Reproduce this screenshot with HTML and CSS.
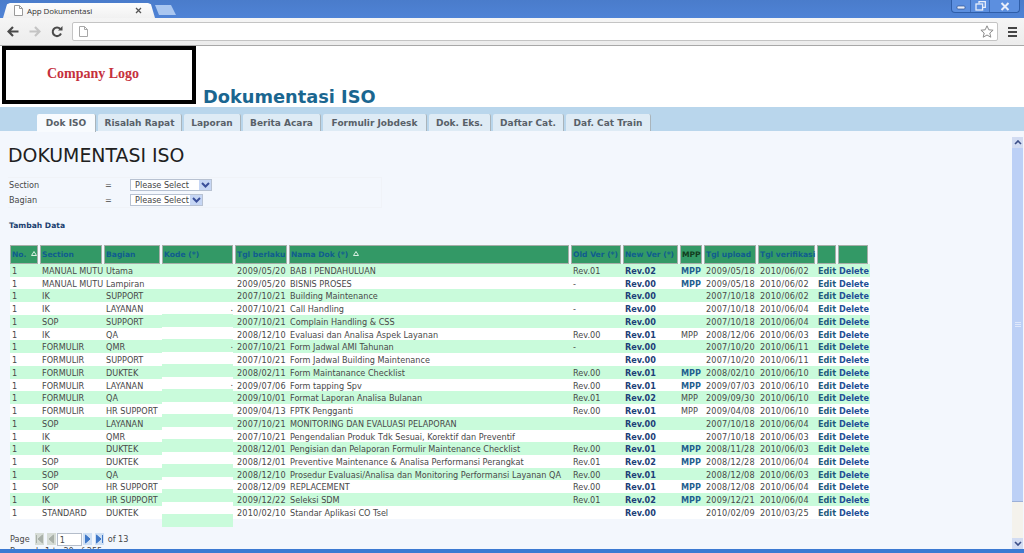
FILE: index.html
```html
<!DOCTYPE html>
<html lang="id">
<head>
<meta charset="utf-8">
<title>App Dokumentasi</title>
<link rel="stylesheet" href="styles.css">
</head>
<body>
<div class="window">
  <div class="titlebar">
    <div class="tab">
      <svg class="doc-icon" width="9" height="11" viewBox="0 0 9 11"><path d="M.5.5h5l3 3v7h-8z" fill="#fff" stroke="#9a9a9a"/><path d="M5.500.5v3h3" fill="none" stroke="#9a9a9a"/></svg>
      <span class="tab-title">App Dokumentasi</span>
      <svg class="tab-close" width="7" height="7" viewBox="0 0 7 7"><path d="M1 1l5 5M6 1L1 6" stroke="#555" stroke-width="1.300"/></svg>
    </div>
    <div class="newtab"></div>
    <div class="winctl">
      <span class="wbtn wmin"><svg width="10" height="8" viewBox="0 0 10 8"><rect x="1" y="4" width="8" height="3" rx="1" fill="#e8eefa" stroke="#2c4f8c" stroke-width=".7"/></svg></span>
      <span class="wbtn wres"><svg width="11" height="10" viewBox="0 0 11 10"><path d="M4 2.500V.7h6.300v5.600H8" fill="none" stroke="#e8eefa" stroke-width="1.300"/><rect x="1" y="3" width="6.600" height="6" fill="none" stroke="#e8eefa" stroke-width="1.300"/></svg></span>
      <span class="wbtn wcls"><svg width="10" height="9" viewBox="0 0 10 9"><path d="M1.500 1l7 7M8.500 1l-7 7" stroke="#e8eefa" stroke-width="2"/></svg></span>
    </div>
  </div>
  <div class="toolbar">
    <svg class="tool" width="12" height="11" viewBox="0 0 12 11"><path d="M11.500 5.500H2.500M6 1L1.500 5.500 6 10" fill="none" stroke="#4a4a4a" stroke-width="2.200"/></svg>
    <svg class="tool" width="12" height="11" viewBox="0 0 12 11"><path d="M.5 5.500h9M6 1l4.500 4.500L6 10" fill="none" stroke="#c4c4c4" stroke-width="2.200"/></svg>
    <svg class="tool" width="12" height="12" viewBox="0 0 12 12"><path d="M10 7.500A4.300 4.300 0 1 1 9.300 3" fill="none" stroke="#4a4a4a" stroke-width="2"/><path d="M7 4.500h4.500V0z" fill="#4a4a4a"/></svg>
    <div class="omnibox">
      <svg width="9" height="11" viewBox="0 0 9 11"><path d="M.5.5h5l3 3v7h-8z" fill="#fff" stroke="#a8a8a8"/><path d="M5.500.5v3h3" fill="none" stroke="#a8a8a8"/></svg>
      <svg width="14" height="13" viewBox="0 0 14 13"><path d="M7 .8l1.800 4 4.300.4-3.300 2.800 1 4.200L7 10l-3.800 2.200 1-4.200L.9 5.200l4.300-.4z" fill="#fff" stroke="#8c8c8c"/></svg>
    </div>
    <div class="menu"><i></i><i></i><i></i></div>
  </div>

  <header class="site-header">
    <div class="logo">Company Logo</div>
    <div class="app-title">Dokumentasi ISO</div>
  </header>

  <nav class="tabs">
    <a class="navtab active t1">Dok ISO</a>
    <a class="navtab t2">Risalah Rapat</a>
    <a class="navtab t3">Laporan</a>
    <a class="navtab t4">Berita Acara</a>
    <a class="navtab t5">Formulir Jobdesk</a>
    <a class="navtab t6">Dok. Eks.</a>
    <a class="navtab t7">Daftar Cat.</a>
    <a class="navtab t8">Daf. Cat Train</a>
  </nav>

  <div class="page">
    <main class="content">
      <h1>DOKUMENTASI ISO</h1>
      <div class="filter">
        <div class="filter-row">
          <span class="flabel">Section</span><span class="feq">=</span>
          <div class="select sel-wide"><span>Please Select</span><b><svg width="9" height="6" viewBox="0 0 9 6"><path d="M1 1l3.500 3.500L8 1" fill="none" stroke="#3a4f9a" stroke-width="2"/></svg></b></div>
        </div>
        <div class="filter-row">
          <span class="flabel">Bagian</span><span class="feq">=</span>
          <div class="select"><span>Please Select</span><b><svg width="9" height="6" viewBox="0 0 9 6"><path d="M1 1l3.500 3.500L8 1" fill="none" stroke="#3a4f9a" stroke-width="2"/></svg></b></div>
        </div>
      </div>
      <a class="add">Tambah Data</a>

      <div class="grid">
        <div class="row head">
          <span>No.<svg class="sort" width="6" height="5" viewBox="0 0 6 5"><path d="M3 .5L5.500 4.500H.5z" fill="none" stroke="#d8efe2"/></svg></span><span>Section</span><span>Bagian</span><span>Kode (*)</span><span>Tgl berlaku</span><span>Nama Dok (*)<svg class="sort" width="6" height="5" viewBox="0 0 6 5"><path d="M3 .5L5.500 4.500H.5z" fill="none" stroke="#d8efe2"/></svg></span><span>Old Ver (*)</span><span>New Ver (*)</span><span>MPP</span><span>Tgl upload</span><span>Tgl verifikasi</span><span></span><span></span>
        </div>
        <div class="body">
          <div class="row g"><span>1</span><span>MANUAL MUTU</span><span>Utama</span><span></span><span>2009/05/20</span><span>BAB I PENDAHULUAN</span><span>Rev.01</span><a class="rev">Rev.02</a><a class="mpp">MPP</a><span>2009/05/18</span><span>2010/06/02</span><a class="edit">Edit</a><a class="del">Delete</a></div>
          <div class="row"><span>1</span><span>MANUAL MUTU</span><span>Lampiran</span><span></span><span>2009/05/20</span><span>BISNIS PROSES</span><span>-</span><a class="rev">Rev.00</a><a class="mpp">MPP</a><span>2009/05/18</span><span>2010/06/02</span><a class="edit">Edit</a><a class="del">Delete</a></div>
          <div class="row g"><span>1</span><span>IK</span><span>SUPPORT</span><span></span><span>2007/10/21</span><span>Building Maintenance</span><span></span><a class="rev">Rev.00</a><span></span><span>2007/10/18</span><span>2010/06/02</span><a class="edit">Edit</a><a class="del">Delete</a></div>
          <div class="row"><span>1</span><span>IK</span><span>LAYANAN</span><span></span><span>2007/10/21</span><span>Call Handling</span><span>-</span><a class="rev">Rev.00</a><span></span><span>2007/10/18</span><span>2010/06/04</span><a class="edit">Edit</a><a class="del">Delete</a></div>
          <div class="row g"><span>1</span><span>SOP</span><span>SUPPORT</span><span></span><span>2007/10/21</span><span>Complain Handling &amp; CSS</span><span></span><a class="rev">Rev.00</a><span></span><span>2007/10/18</span><span>2010/06/04</span><a class="edit">Edit</a><a class="del">Delete</a></div>
          <div class="row"><span>1</span><span>IK</span><span>QA</span><span></span><span>2008/12/10</span><span>Evaluasi dan Analisa Aspek Layanan</span><span>Rev.00</span><a class="rev">Rev.01</a><span>MPP</span><span>2008/12/06</span><span>2010/06/03</span><a class="edit">Edit</a><a class="del">Delete</a></div>
          <div class="row g"><span>1</span><span>FORMULIR</span><span>QMR</span><span></span><span>2007/10/21</span><span>Form Jadwal AMI Tahunan</span><span>-</span><a class="rev">Rev.00</a><span></span><span>2007/10/20</span><span>2010/06/11</span><a class="edit">Edit</a><a class="del">Delete</a></div>
          <div class="row"><span>1</span><span>FORMULIR</span><span>SUPPORT</span><span></span><span>2007/10/21</span><span>Form Jadwal Building Maintenance</span><span></span><a class="rev">Rev.00</a><span></span><span>2007/10/20</span><span>2010/06/11</span><a class="edit">Edit</a><a class="del">Delete</a></div>
          <div class="row g"><span>1</span><span>FORMULIR</span><span>DUKTEK</span><span></span><span>2008/02/11</span><span>Form Maintanance Checklist</span><span>Rev.00</span><a class="rev">Rev.01</a><a class="mpp">MPP</a><span>2008/02/10</span><span>2010/06/10</span><a class="edit">Edit</a><a class="del">Delete</a></div>
          <div class="row"><span>1</span><span>FORMULIR</span><span>LAYANAN</span><span></span><span>2009/07/06</span><span>Form tapping Spv</span><span>Rev.00</span><a class="rev">Rev.01</a><a class="mpp">MPP</a><span>2009/07/03</span><span>2010/06/10</span><a class="edit">Edit</a><a class="del">Delete</a></div>
          <div class="row g"><span>1</span><span>FORMULIR</span><span>QA</span><span></span><span>2009/10/01</span><span>Format Laporan Analisa Bulanan</span><span>Rev.01</span><a class="rev">Rev.02</a><span>MPP</span><span>2009/09/30</span><span>2010/06/10</span><a class="edit">Edit</a><a class="del">Delete</a></div>
          <div class="row"><span>1</span><span>FORMULIR</span><span>HR SUPPORT</span><span></span><span>2009/04/13</span><span>FPTK Pengganti</span><span>Rev.00</span><a class="rev">Rev.01</a><span>MPP</span><span>2009/04/08</span><span>2010/06/10</span><a class="edit">Edit</a><a class="del">Delete</a></div>
          <div class="row g"><span>1</span><span>SOP</span><span>LAYANAN</span><span></span><span>2007/10/21</span><span>MONITORING DAN EVALUASI PELAPORAN</span><span></span><a class="rev">Rev.00</a><span></span><span>2007/10/18</span><span>2010/06/04</span><a class="edit">Edit</a><a class="del">Delete</a></div>
          <div class="row"><span>1</span><span>IK</span><span>QMR</span><span></span><span>2007/10/21</span><span>Pengendalian Produk Tdk Sesuai, Korektif dan Preventif</span><span></span><a class="rev">Rev.00</a><span></span><span>2007/10/18</span><span>2010/06/03</span><a class="edit">Edit</a><a class="del">Delete</a></div>
          <div class="row g"><span>1</span><span>IK</span><span>DUKTEK</span><span></span><span>2008/12/01</span><span>Pengisian dan Pelaporan Formulir Maintenance Checklist</span><span>Rev.00</span><a class="rev">Rev.01</a><a class="mpp">MPP</a><span>2008/11/28</span><span>2010/06/03</span><a class="edit">Edit</a><a class="del">Delete</a></div>
          <div class="row"><span>1</span><span>SOP</span><span>DUKTEK</span><span></span><span>2008/12/01</span><span>Preventive Maintenance &amp; Analisa Performansi Perangkat</span><span>Rev.01</span><a class="rev">Rev.02</a><a class="mpp">MPP</a><span>2008/12/28</span><span>2010/06/04</span><a class="edit">Edit</a><a class="del">Delete</a></div>
          <div class="row g"><span>1</span><span>SOP</span><span>QA</span><span></span><span>2008/12/10</span><span>Prosedur Evaluasi/Analisa dan Monitoring Performansi Layanan QA</span><span>Rev.00</span><a class="rev">Rev.01</a><span></span><span>2008/12/08</span><span>2010/06/03</span><a class="edit">Edit</a><a class="del">Delete</a></div>
          <div class="row"><span>1</span><span>SOP</span><span>HR SUPPORT</span><span></span><span>2008/12/09</span><span>REPLACEMENT</span><span>Rev.00</span><a class="rev">Rev.01</a><a class="mpp">MPP</a><span>2008/12/08</span><span>2010/06/04</span><a class="edit">Edit</a><a class="del">Delete</a></div>
          <div class="row g"><span>1</span><span>IK</span><span>HR SUPPORT</span><span></span><span>2009/12/22</span><span>Seleksi SDM</span><span>Rev.01</span><a class="rev">Rev.02</a><a class="mpp">MPP</a><span>2009/12/21</span><span>2010/06/04</span><a class="edit">Edit</a><a class="del">Delete</a></div>
          <div class="row"><span>1</span><span>STANDARD</span><span>DUKTEK</span><span></span><span>2010/02/10</span><span>Standar Aplikasi CO Tsel</span><span></span><a class="rev">Rev.00</a><span></span><span>2010/02/09</span><span>2010/03/25</span><a class="edit">Edit</a><a class="del">Delete</a></div>
          <div class="kode">
            <i class="g"></i><i></i><i class="g"></i><i>.</i><i class="g"></i><i></i><i class="g">.</i><i></i><i class="g"></i><i>.</i><i class="g"></i><i></i><i class="g"></i><i></i><i class="g"></i><i></i><i class="g"></i><i></i><i class="g"></i><i></i><i class="g"></i>
          </div>
        </div>
      </div>

      <div class="pager">
        <span class="plabel">Page</span>
        <span class="pbtns">
          <svg width="9" height="12" viewBox="0 0 9 12"><rect width="9" height="12" fill="#d6dcd6"/><path d="M1.500 2v8M7.500 2L3 6l4.500 4z" fill="#a9b0a9" stroke="#a9b0a9"/></svg>
          <svg width="9" height="12" viewBox="0 0 9 12"><rect width="9" height="12" fill="#d6dcd6"/><path d="M6.500 2L2 6l4.500 4z" fill="#a9b0a9" stroke="#a9b0a9"/></svg>
        </span>
        <span class="pinput">1</span>
        <span class="pbtns">
          <svg width="9" height="12" viewBox="0 0 9 12"><rect width="9" height="12" fill="#cfe0f4"/><path d="M2.500 2L7 6l-4.500 4z" fill="#3f78c8" stroke="#3f78c8"/></svg>
          <svg width="9" height="12" viewBox="0 0 9 12"><rect width="9" height="12" fill="#cfe0f4"/><path d="M7.500 2v8M1.500 2L6 6l-4.500 4z" fill="#3f78c8" stroke="#3f78c8"/></svg>
        </span>
        <span class="pof">of 13</span>
      </div>
      <div class="records">Records 1 to 20 of 255</div>
    </main>

    <aside class="scrollbar">
      <div class="sb-btn"><svg width="8" height="5" viewBox="0 0 8 5"><path d="M1 4l3-3 3 3" fill="none" stroke="#3c4f88" stroke-width="1.600"/></svg></div>
      <div class="sb-thumb"><i></i><i></i><i></i></div>
      <div class="sb-track"></div>
      <div class="sb-btn"><svg width="8" height="5" viewBox="0 0 8 5"><path d="M1 1l3 3 3-3" fill="none" stroke="#3c4f88" stroke-width="1.600"/></svg></div>
    </aside>
  </div>
  <div class="bottombar"></div>
</div>
</body>
</html>
```
FILE: styles.css
```css
* { box-sizing: border-box; }
html, body { margin: 0; padding: 0; height: 553px; overflow: hidden; background: #fff; }
body { font-family: "DejaVu Sans", Verdana, sans-serif; font-size: 8.150px; color: #484848; }
.window { width: 1024px; height: 553px; display: flex; flex-direction: column; overflow: hidden; }

/* browser frame */
.titlebar { height: 18px; flex: none; display: flex; align-items: flex-end; background: linear-gradient(#4a7ccb, #4f83d6); }
.tab { width: 152px; height: 15px; margin-left: 3px; padding: 0 0 0 11px; display: flex; align-items: center; background: linear-gradient(#fdfdfd, #f1f1f1); clip-path: polygon(0 100%, 4px 8%, 7px 0, 145px 0, 148px 8%, 152px 100%); }
.doc-icon { flex: none; }
.tab-title { margin-left: 4px; font-family: "Open Sans", "Liberation Sans", sans-serif; font-size: 8px; letter-spacing: -.1px; color: #333; width: 108px; white-space: nowrap; }
.tab-close { flex: none; }
.newtab { width: 21px; height: 10px; margin-bottom: 3px; background: #a9c6f0; clip-path: polygon(0 0, 16px 0, 21px 100%, 4px 100%); }
.winctl { margin-left: auto; margin-right: 4px; align-self: flex-start; display: flex; height: 13px; border: 1px solid #2f5ea8; border-top: 0; border-radius: 0 0 4px 4px; background: #5c8fdf; }
.wbtn { height: 100%; display: flex; align-items: center; justify-content: center; border-right: 1px solid #3f6db8; }
.wmin, .wres { width: 19px; }
.wcls { width: 29px; border-right: 0; }
.toolbar { height: 28px; flex: none; display: flex; align-items: center; padding: 0 7px; background: linear-gradient(#f5f5f5, #ececec); border-bottom: 1px solid #a8a8a8; }
.tool { flex: none; margin-right: 10px; }
.omnibox { flex: none; width: 926px; height: 19px; margin-left: -1px; margin-right: 10px; padding: 0 3px 0 6px; display: flex; align-items: center; justify-content: space-between; background: #fff; border: 1px solid #c4c4c4; border-radius: 2px; }
.menu { display: flex; flex-direction: column; gap: 2px; width: 10px; }
.menu i { display: block; height: 2px; background: #444; }

/* site */
.site-header { height: 61px; flex: none; display: flex; align-items: flex-end; background: #fff; padding-left: 2px; }
.logo { width: 194px; height: 58px; margin-bottom: 3px; border: 4px solid #000; display: flex; align-items: center; justify-content: center; padding-bottom: 2px; padding-right: 12px; font: bold 14px "Liberation Serif", serif; color: #c5303c; }
.app-title { margin-left: 7px; margin-bottom: -1px; font-size: 17.800px; line-height: 22px; font-weight: bold; color: #1a6690; white-space: nowrap; }
.tabs { height: 24px; flex: none; display: flex; align-items: flex-end; padding-left: 37px; gap: 2px; background: #b9d6ec; }
.navtab { height: 17px; padding: 0 4px; display: flex; align-items: center; justify-content: center; font-size: 9px; font-weight: bold; color: #586068; background: #deebf5; border-right: 1px solid #a9b4bb; border-radius: 2px 2px 0 0; white-space: nowrap; }
.navtab.active { background: #f8fbfe; height: 18px; margin-bottom: -1px; position: relative; }
.t1 { width: 59px; } .t2 { width: 84px; } .t3 { width: 57px; } .t4 { width: 78px; }
.t5 { width: 104px; } .t6 { width: 62px; } .t7 { width: 71px; } .t8 { width: 85px; }

.page { flex: 1; min-height: 0; display: flex; background: #f3f7fd; overflow: hidden; }
.content { flex: 1; min-width: 0; padding: 0 0 0 8px; overflow: hidden; }
.scrollbar { flex: none; width: 11px; margin: 6px 1px 0 0; display: flex; flex-direction: column; }
.sb-btn { height: 11px; flex: none; display: flex; align-items: center; justify-content: center; background: #d2dcf2; }
.sb-thumb { height: 354px; flex: none; display: flex; flex-direction: column; align-items: center; justify-content: center; gap: 1px; background: #bcd0f6; border-bottom: 1px solid #9cb0d8; }
.sb-thumb i { width: 6px; height: 1px; background: #dfe8fb; }
.sb-track { flex: 1; background: #f4f2ec; }

h1 { margin: 13px 0 0; font-size: 18.900px; line-height: 23px; font-weight: normal; color: #202020; white-space: nowrap; }
.filter { width: 374px; height: 31px; margin-top: 10px; padding: 1px 0 0 1px; display: flex; flex-direction: column; gap: 3px; border: 1px solid #f0f3f8; border-left: 0; }
.filter-row { height: 12px; display: flex; align-items: center; }
.flabel { width: 96px; }
.feq { width: 25px; }
.select { width: 73px; height: 12px; display: flex; align-items: center; justify-content: space-between; padding-left: 4px; background: #fff; border: 1px solid #b8c2d2; color: #444; white-space: nowrap; }
.sel-wide { width: 82px; }
.select b { width: 12px; height: 10px; flex: none; display: flex; align-items: center; justify-content: center; background: #c6d6f4; }
.add { display: block; margin: 12px 0 0 1px; font-size: 7.600px; font-weight: bold; color: #203f70; line-height: 12px; }

.grid { width: 860px; margin: 13px 0 0 2px; }
.row { display: grid; grid-template-columns: 30px 64px 58px 73px 54px 282px 52px 57px 24px 54px 59px 21px 32px; height: 12.740px; line-height: 14px; white-space: nowrap; background: #fff; }
.row > * { padding-left: 2px; }
.row > :nth-child(5), .row > :nth-child(10), .row > :nth-child(11) { letter-spacing: .2px; }
.row > :nth-child(6), .row > :nth-child(9), .row > :nth-child(12), .row > :nth-child(13) { padding-left: 1px; }
.row.g { background: #c9fbdb; }
.row.head { height: 19px; line-height: 17px; font-size: 7.600px; font-weight: bold; color: #105d8e; background: transparent; }
.row.head > span { margin-right: 2px; padding-left: 1px; letter-spacing: 0; background: #339966; border: 1px solid #a6aea8; border-bottom-width: 2px; }
.row.head > span:nth-child(9) { color: #123c1e; }
.sort { margin-left: 5px; vertical-align: 1px; }
.rev { font-weight: bold; color: #1d3f78; }
.mpp { font-weight: bold; color: #1f5f8f; }
.edit { font-weight: bold; color: #1f5a7c; }
.del { font-weight: bold; color: #1f4f96; }
.body { position: relative; }
.kode { position: absolute; left: 152px; top: 0; width: 71px; display: flex; flex-direction: column; background: #fff; }
.kode i { display: block; height: 12.500px; line-height: 12.500px; text-align: right; font-style: normal; }
.kode i.g { background: #c9fbdb; }

.pager { display: flex; align-items: center; height: 13px; margin: 14px 0 0 2px; gap: 3px; }
.plabel { margin-right: 2px; }
.pbtns { display: flex; gap: 3px; }
.pinput { width: 25px; height: 13px; padding-left: 2px; line-height: 12px; background: #fff; border: 1px solid #b4bdca; margin: 0 -2px; }
.pof { margin-left: 1px; }
.records { margin: 0 0 0 2px; line-height: 10px; }
.bottombar { height: 4px; flex: none; background: #3b7ad2; }
```
